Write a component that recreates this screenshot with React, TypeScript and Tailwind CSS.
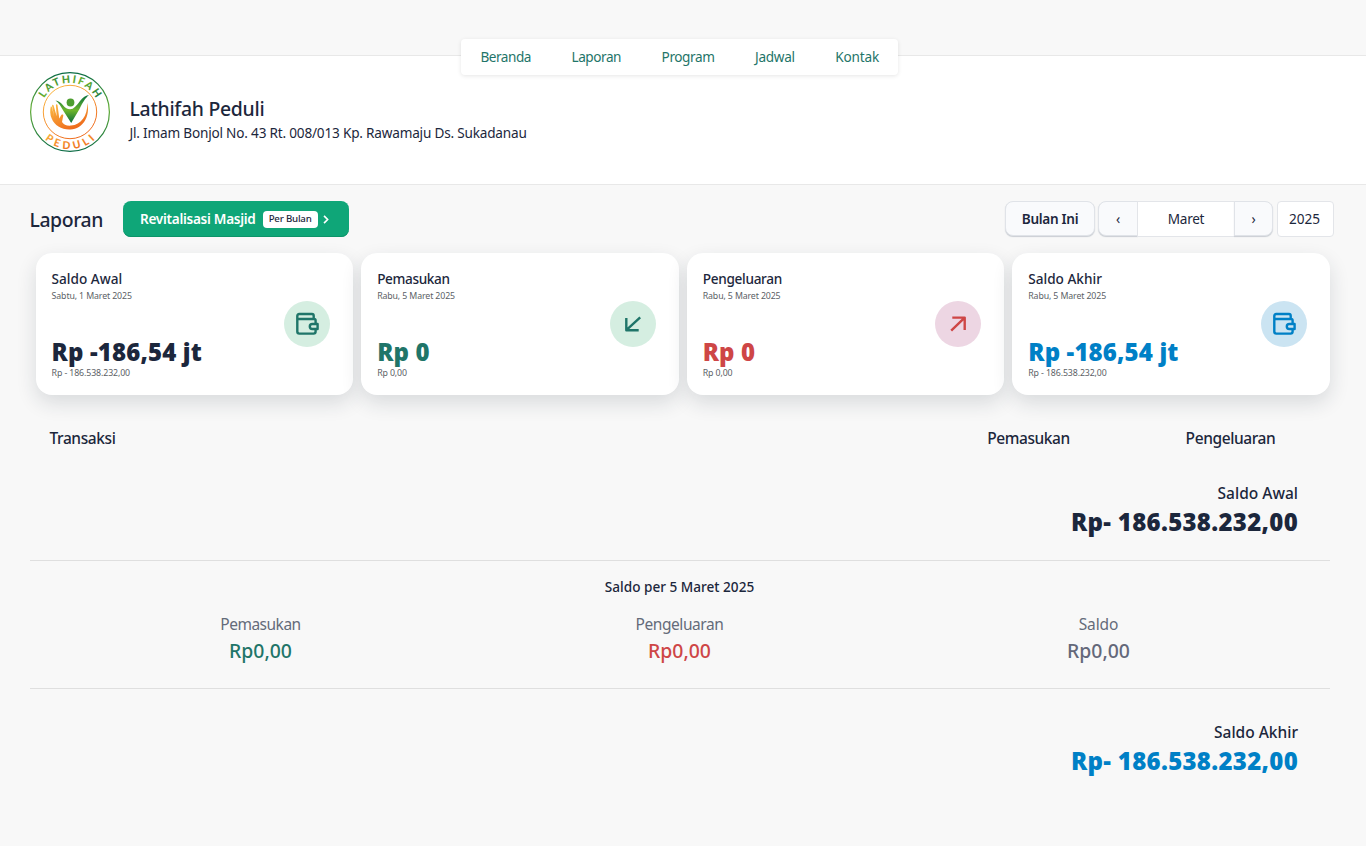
import type { ReactNode } from "react";

const navItems = [
  { label: "Beranda", cls: "tracking-[-0.49px]" },
  { label: "Laporan", cls: "tracking-[-0.45px]" },
  { label: "Program", cls: "tracking-[-0.41px]" },
  { label: "Jadwal", cls: "tracking-[-0.3px]" },
  { label: "Kontak", cls: "tracking-[-0.2px]" },
];

function Logo() {
  return (
    <svg viewBox="0 0 80 80" className="size-20 shrink-0">
      <defs>
        <linearGradient id="green" x1="0" y1="0" x2="1" y2="1">
          <stop offset="0" stopColor="#0b6b45" />
          <stop offset=".5" stopColor="#6cb32e" />
          <stop offset="1" stopColor="#0b6b45" />
        </linearGradient>
        <linearGradient id="ring" x1="0" y1="0" x2="0" y2="1">
          <stop offset="0" stopColor="#0b6b45" />
          <stop offset=".45" stopColor="#62ae35" />
          <stop offset="1" stopColor="#0b6b45" />
        </linearGradient>
        <linearGradient id="orange" x1="0" y1="0" x2="0.6" y2="1">
          <stop offset="0" stopColor="#fcc044" />
          <stop offset="1" stopColor="#ee6a1c" />
        </linearGradient>
        <linearGradient id="body" x1="0" y1="0" x2="0" y2="1">
          <stop offset="0" stopColor="#07703e" />
          <stop offset=".55" stopColor="#6db52b" />
          <stop offset="1" stopColor="#0a6b3d" />
        </linearGradient>
        <path id="arcTop" d="M10.800 40a29.200 29.200 0 0 1 58.400 0" />
        <path id="arcBottom" d="M3 40a37 37 0 0 0 74 0" />
      </defs>
      <circle cx="40" cy="40" r="39.4" fill="#fff" stroke="url(#ring)" strokeWidth="1.2" />
      <circle cx="40" cy="40" r="26.7" fill="none" stroke="url(#orange)" strokeWidth="1" />
      <text className="font-['Lato',sans-serif] text-[10.5px] font-black" fill="url(#green)" textAnchor="middle" letterSpacing="1.8">
        <textPath href="#arcTop" startOffset="51%">LATHIFAH</textPath>
      </text>
      <text className="font-['Lato',sans-serif] text-[10.5px] font-black" fill="url(#orange)" textAnchor="middle" letterSpacing="3.6">
        <textPath href="#arcBottom" startOffset="51.5%">PEDULI</textPath>
      </text>
      <path d="M20.700 35c-.8 3-.7 8 1 11.500C24.500 53.500 32 58 40.500 57.500 53 57 60.500 44 57.300 31c.3 13-6.300 21.800-16.300 22.600-4.500.3-7.500-1-9-3.600l1.300-6.500c.2-1.500-1.800-1.500-2.500.3l-1.500 2.700L27.500 33c-.3-1.200-1.700-1-1.600.3l.8 11L23.600 33.500c-.4-1.100-1.700-.7-1.500.5l2 10.500-2-8.500c-.4-1.500-1.200-1.800-1.400-1z" fill="url(#orange)" />
      <circle cx="40.500" cy="30.500" r="3.900" fill="#4d9e2f" />
      <path d="M25.500 28.500c3 .4 5.200 2 7.300 4.500 2.400 2.900 4.500 4.300 7.200 4.300 4 0 6.500-3.800 10-8.300 2.700-3.300 5-5.500 9-6-4 3.500-6 7-9.500 14L41.200 51 33.500 39C31 34.800 29 31 25.500 28.500z" fill="url(#body)" />
    </svg>
  );
}

function Stroke({ children }: { children: ReactNode }) {
  return (
    <svg viewBox="0 0 24 24" className="size-6" fill="none" stroke="currentColor" strokeWidth="2.4" strokeLinejoin="round">
      {children}
    </svg>
  );
}

const wallet = (
  <Stroke>
    <path d="M20.600 11.500V8.500q0-1.500-1.500-1.500H2.500M2.300 4q0-2 2-2H17q1.700 0 1.700 1.700V7M2.300 4v15.600q0 2 2 2h14.300q2 0 2-2V17" />
    <path d="M22.600 12h-5.300a2.500 2.500 0 0 0 0 5h5.300z" />
  </Stroke>
);
const arrowIn = (
  <Stroke>
    <path d="M5.300 6v12.200h12.400M5.300 18.200 19.200 5.300" />
  </Stroke>
);
const arrowOut = (
  <Stroke>
    <path d="M6.300 5.600h12.400v12.400M18.700 5.600 5.200 18.700" />
  </Stroke>
);

const cards = [
  { title: "Saldo Awal", date: "Sabtu, 1 Maret 2025", short: "Rp -186,54 jt", full: "Rp - 186.538.232,00", color: "text-[#1c273c]", badge: "bg-[#d5eee1] text-[#1f7569]", t: "tracking-[0px]", icon: wallet },
  { title: "Pemasukan", date: "Rabu, 5 Maret 2025", short: "Rp 0", full: "Rp 0,00", color: "text-[#1f7569]", badge: "bg-[#d5eee1] text-[#1f7569]", t: "tracking-[-0.36px]", icon: arrowIn },
  { title: "Pengeluaran", date: "Rabu, 5 Maret 2025", short: "Rp 0", full: "Rp 0,00", color: "text-[#ce4646]", badge: "bg-[#edd6e3] text-[#ce4646]", t: "tracking-[-0.3px]", icon: arrowOut },
  { title: "Saldo Akhir", date: "Rabu, 5 Maret 2025", short: "Rp -186,54 jt", full: "Rp - 186.538.232,00", color: "text-[#0080c6]", badge: "bg-[#cbe4f2] text-[#0080c6]", t: "tracking-[0px]", icon: wallet },
];

const totals = [
  { label: "Pemasukan", color: "text-[#1f7569]", t: "tracking-[-0.5px]" },
  { label: "Pengeluaran", color: "text-[#ce4646]", t: "tracking-[-0.43px]" },
  { label: "Saldo", color: "text-[#64687a]", t: "tracking-[-0.1px]" },
];

function Balance({ label, color }: { label: string; color: string }) {
  return (
    <div className="flex flex-col items-end pr-8">
      <div className="text-[15.5px] leading-6 font-medium">{label}</div>
      <div className={`pt-px text-2xl leading-8 font-black tracking-[0.3px] ${color}`}>Rp- 186.538.232,00</div>
    </div>
  );
}

const shade = "border border-[#e0e3e8] bg-[#f9fafc] shadow-[0_1px_1px_#c9cdd3]";

export default function App() {
  return (
    <div className="h-[846px] overflow-hidden bg-[#f8f8f8] font-['Noto_Sans',sans-serif] text-[#1c273c]">
      <div className="h-[55px]" />
      <header className="relative h-[130px] border-y border-[#e8e8e8] bg-white">
        <nav className="absolute -top-[17px] left-[461px] flex h-9 w-[437px] items-center justify-between rounded bg-white pr-[19px] pl-[19.5px] text-[13.6px] text-[#1f7569] shadow-[0_1px_4px_rgba(0,0,0,0.1)]">
          {navItems.map((n) => (
            <a key={n.label} className={n.cls}>{n.label}</a>
          ))}
        </nav>
        <div className="flex items-start gap-[19.5px] pt-4 pl-[30px]">
          <Logo />
          <div className="pt-[23px]">
            <h1 className="text-[19.4px] leading-7 font-medium tracking-[-0.28px]">Lathifah Peduli</h1>
            <p className="text-[13.6px] leading-5 tracking-[-0.2px]">Jl. Imam Bonjol No. 43 Rt. 008/013 Kp. Rawamaju Ds. Sukadanau</p>
          </div>
        </div>
      </header>

      <div className="mt-4 flex h-9 items-center pr-8 pl-[29.5px]">
        <h2 className="w-[93.5px] pt-[2px] text-[19.4px] font-medium tracking-[-0.42px]">Laporan</h2>
        <button className="flex h-9 w-[226px] items-center rounded-lg bg-[#0fa678] pl-[17px] text-[13.6px] font-semibold text-white shadow-[inset_0_-1px_0_#0c9469]">
          <span className="pt-px tracking-[-0.29px]">Revitalisasi Masjid</span>
          <span className="ml-[7px] flex h-[17px] w-[55px] items-center justify-center rounded bg-white text-[9.7px] font-medium tracking-[-0.2px] text-[#1c273c]">Per Bulan</span>
          <svg viewBox="0 0 6 10" className="ml-[5px] h-[9px] w-[6px]" fill="none" stroke="currentColor" strokeWidth="1.8">
            <path d="m.8 1 4 4-4 4" />
          </svg>
        </button>
        <div className="ml-auto flex text-[13.6px]">
          <button className={`h-[35px] w-[90px] rounded-lg pt-px font-semibold tracking-[-0.3px] ${shade}`}>Bulan Ini</button>
          <button className={`ml-[3px] h-[35px] w-10 rounded-l-lg pt-px ${shade}`}>‹</button>
          <div className="-ml-px flex h-9 w-[98px] items-center justify-center border border-[#e3e5e9] bg-white tracking-[-0.27px]">Maret</div>
          <button className={`-ml-px h-[35px] w-[39px] rounded-r-lg pt-px ${shade}`}>›</button>
          <div className="ml-1 flex h-9 w-[57px] items-center justify-center rounded-sm border border-[#e3e5e9] bg-white pr-0.5">2025</div>
        </div>
      </div>

      <section className="mt-4 grid grid-cols-4 gap-2 pr-[36.2px] pl-[35.6px]">
        {cards.map((c) => (
          <article key={c.title} className="flex h-[142px] items-center justify-between rounded-2xl bg-white pr-[23px] pl-4 shadow-[0_8px_20px_rgba(28,39,60,0.14)]">
            <div className="flex h-full flex-col pt-4">
              <h3 className={`text-[13.6px] leading-5 font-medium ${c.t}`}>{c.title}</h3>
              <p className="text-[8.8px] leading-[14px] tracking-[-0.13px] text-[#5c5f66]">{c.date}</p>
              <p className={`mt-[33px] text-2xl leading-8 font-black tracking-[0.15px] ${c.color}`}>{c.short}</p>
              <p className="text-[8.8px] leading-[11px] tracking-[-0.12px] text-[#5c5f66]">{c.full}</p>
            </div>
            <span className={`flex size-[46px] items-center justify-center rounded-full ${c.badge}`}>{c.icon}</span>
          </article>
        ))}
      </section>

      <section className="mx-[30px] w-[1300px]">
        <div className="grid h-[86px] grid-cols-[897.5px_202px_202px] items-center pt-0.5 text-[15.5px] font-medium">
          <div className="pl-[19.5px] tracking-[-0.4px]">Transaksi</div>
          <div className="text-center tracking-[-0.45px]">Pemasukan</div>
          <div className="text-center tracking-[-0.4px]">Pengeluaran</div>
        </div>
        <div className="h-[80px] border-b border-[#dfdfdf]">
          <Balance label="Saldo Awal" color="" />
        </div>
        <div className="h-32 border-b border-[#dfdfdf] pt-4">
          <h3 className="pr-px text-center text-[13.6px] leading-5 font-medium">Saldo per 5 Maret 2025</h3>
          <div className="mt-[15px] grid grid-cols-3 pr-[22px] pl-[21px] text-center">
            {totals.map((t) => (
              <div key={t.label}>
                <div className={`text-[15.5px] leading-6 text-[#646b7a] ${t.t}`}>{t.label}</div>
                <div className={`pt-px text-[19.4px] leading-7 font-medium ${t.color}`}>Rp0,00</div>
              </div>
            ))}
          </div>
        </div>
        <div className="pt-[31px]">
          <Balance label="Saldo Akhir" color="text-[#0080c6]" />
        </div>
      </section>
    </div>
  );
}
